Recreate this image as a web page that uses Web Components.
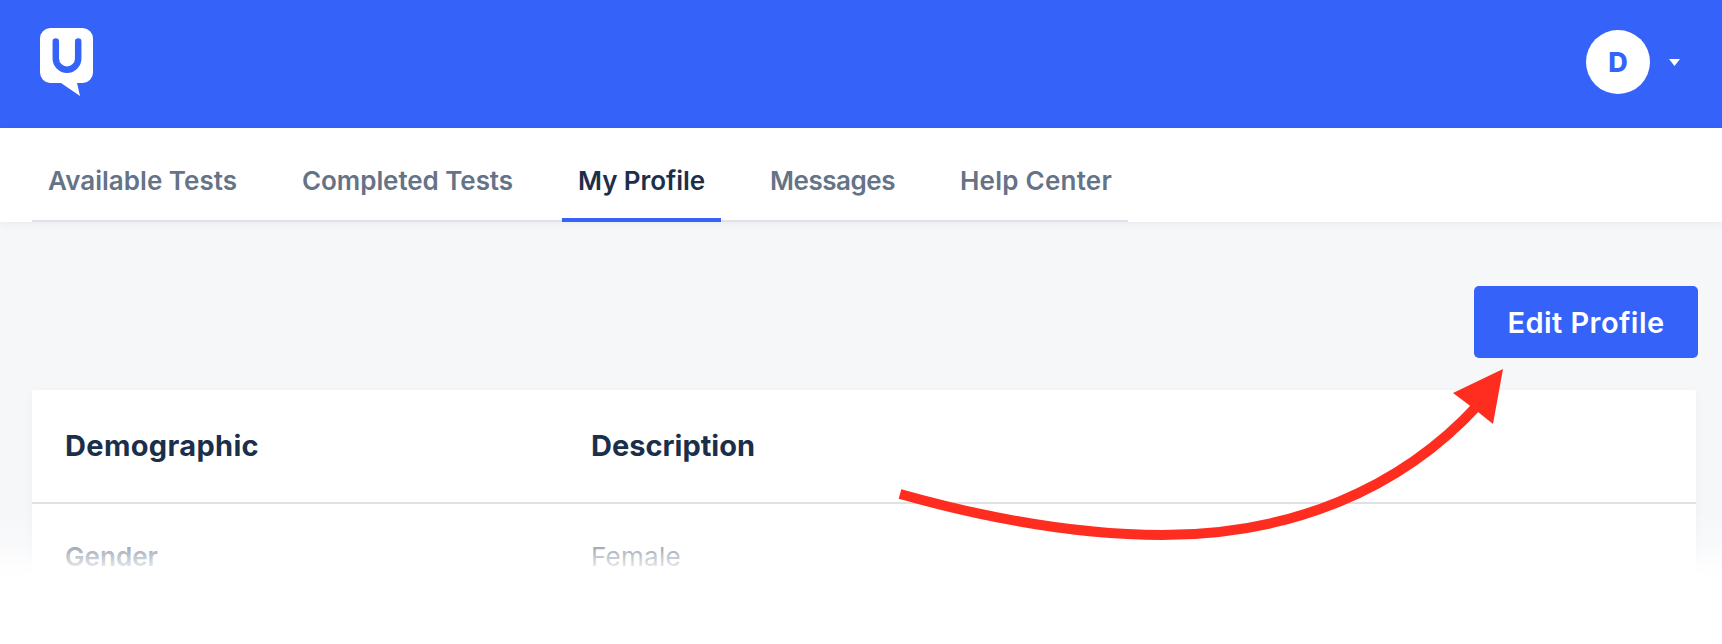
<!DOCTYPE html>
<html><head><meta charset="utf-8">
<style>
html,body{margin:0;padding:0;background:#fff}
body{width:1722px;height:644px;overflow:hidden;position:relative;font-family:Inter,"Liberation Sans",sans-serif}
</style></head>
<body>
<app-shell>
  <app-header slot="header"></app-header>
  <tab-bar slot="tabs">
    <tab-item w="189">Available Tests</tab-item>
    <tab-item w="211">Completed Tests</tab-item>
    <tab-item active w="127">My Profile</tab-item>
    <tab-item w="125">Messages</tab-item>
    <tab-item w="152">Help Center</tab-item>
  </tab-bar>
  <action-row><edit-button w="157">Edit Profile</edit-button></action-row>
  <profile-card>
    <profile-row head><span w="194">Demographic</span><span slot="value" w="164">Description</span></profile-row>
    <profile-row><span w="93">Gender</span><span slot="value" w="90">Female</span></profile-row>
  </profile-card>
</app-shell>
<fade-overlay></fade-overlay>
<callout-arrow></callout-arrow>
<script>
function fit(el){
  const w=+el.getAttribute('w'); const r=document.createRange(); r.selectNodeContents(el);
  const cur=r.getBoundingClientRect().width; const n=el.textContent.length;
  el.style.letterSpacing=((w-cur)/n).toFixed(3)+'px';
}
function def(name, html, init){
  customElements.define(name, class extends HTMLElement{
    constructor(){super();this.attachShadow({mode:'open'}).innerHTML=html;}
    connectedCallback(){ if(init) init(this); }
  });
}
def('app-shell',`<style>:host{display:block;background:#f6f7f9;height:644px}</style>
<slot name="header"></slot><slot name="tabs"></slot><slot></slot>`);
def('app-header',`<style>
:host{display:flex;align-items:flex-start;justify-content:space-between;height:128px;background:#3563fa;box-sizing:border-box;padding:28px 42px 0 39.500px}
.user{display:flex;align-items:center;gap:19px;margin-top:2px}
.av{width:64px;height:64px;border-radius:50%;background:#fff;color:#3563fa;display:flex;align-items:center;justify-content:center;font:800 27px Inter,sans-serif}
svg{display:block}
</style>
<svg width="54" height="69" viewBox="0 0 54 69"><path fill="#fff" d="M10 0H43A10.500 10.500 0 0 1 53 10.500V44.500A10.500 10.500 0 0 1 43 55H37L40 68L21 55H10A10.500 10.500 0 0 1 0 44.500V10.500A10.500 10.500 0 0 1 10 0Z"/><path fill="none" stroke="#3563fa" stroke-width="6.500" stroke-linecap="round" d="M15.800 13.500V30.500A11.200 11.200 0 0 0 38.200 30.500V13.500"/></svg>
<div class="user"><div class="av">D</div><svg width="11" height="7" viewBox="0 0 11 7"><path fill="#fff" d="M0 0H11L5.500 7Z"/></svg></div>`);
def('tab-bar',`<style>
:host{display:block;background:#fff;height:94px;box-shadow:0 2px 8px rgba(30,45,70,.06);position:relative}
.t{display:inline-flex;gap:33px;margin-left:32px;height:94px;box-sizing:border-box;border-bottom:2px solid #dfe1e6}
</style><div class="t"><slot></slot></div>`);
def('tab-item',`<style>
:host{display:flex;align-items:flex-start;box-sizing:border-box;height:94px;padding:37px 16px 0;font-weight:600;font-size:26px;line-height:32px;color:#657387;white-space:nowrap}
:host([active]){color:#1b2f4b;border-bottom:4px solid #3563fa}
</style><slot></slot>`, fit);
def('action-row',`<style>:host{display:flex;justify-content:flex-end;padding:64px 24px 32px 32px}</style><slot></slot>`);
def('edit-button',`<style>
:host{display:flex;align-items:center;justify-content:center;width:224px;height:72px;background:#3563fa;color:#fff;border-radius:5px;font-weight:600;font-size:29px}
</style><slot></slot>`, fit);
def('profile-card',`<style>:host{display:block;margin:0 26px 0 32px;height:200px;background:#fff;box-shadow:0 2px 10px rgba(30,45,70,.04)}</style><slot></slot>`);
def('profile-row',`<style>
:host{display:grid;grid-template-columns:526px 1fr;padding:37px 33px 0;font-size:26px;line-height:32px;color:#657387;font-weight:600}
:host([head]){height:114px;box-sizing:border-box;border-bottom:2px solid #dfe1e6;padding-top:38px;font-size:29px;line-height:36px;color:#1b2f4b;font-weight:700}
:host([head]) ::slotted([slot=value]){font-weight:700;color:#1b2f4b}
::slotted([slot=value]){font-weight:400;color:#657387}
</style><div><slot></slot></div><div><slot name="value"></slot></div>`, el=>[...el.children].forEach(fit));
def('fade-overlay',`<style>
:host{position:absolute;left:0;top:510px;width:1722px;height:134px;background:linear-gradient(to bottom,rgba(255,255,255,0) 0,rgba(255,255,255,.35) 35px,rgba(255,255,255,.85) 58px,#fff 66px,#fff 100%)}
</style>`);
def('callout-arrow',`<style>
:host{position:absolute;left:0;top:0;width:1722px;height:644px;pointer-events:none}
svg{display:block}
</style><svg width="1722" height="644" viewBox="0 0 1722 644">
<path fill="none" stroke="#ff2d1f" stroke-width="10" d="M900 494C1000 522 1085 535 1162 535C1290 535 1400 490 1478 405"/>
<path fill="#ff2d1f" d="M1503 369L1453 393L1473 408L1493 424Z"/>
</svg>`);
</script>
</body></html>
